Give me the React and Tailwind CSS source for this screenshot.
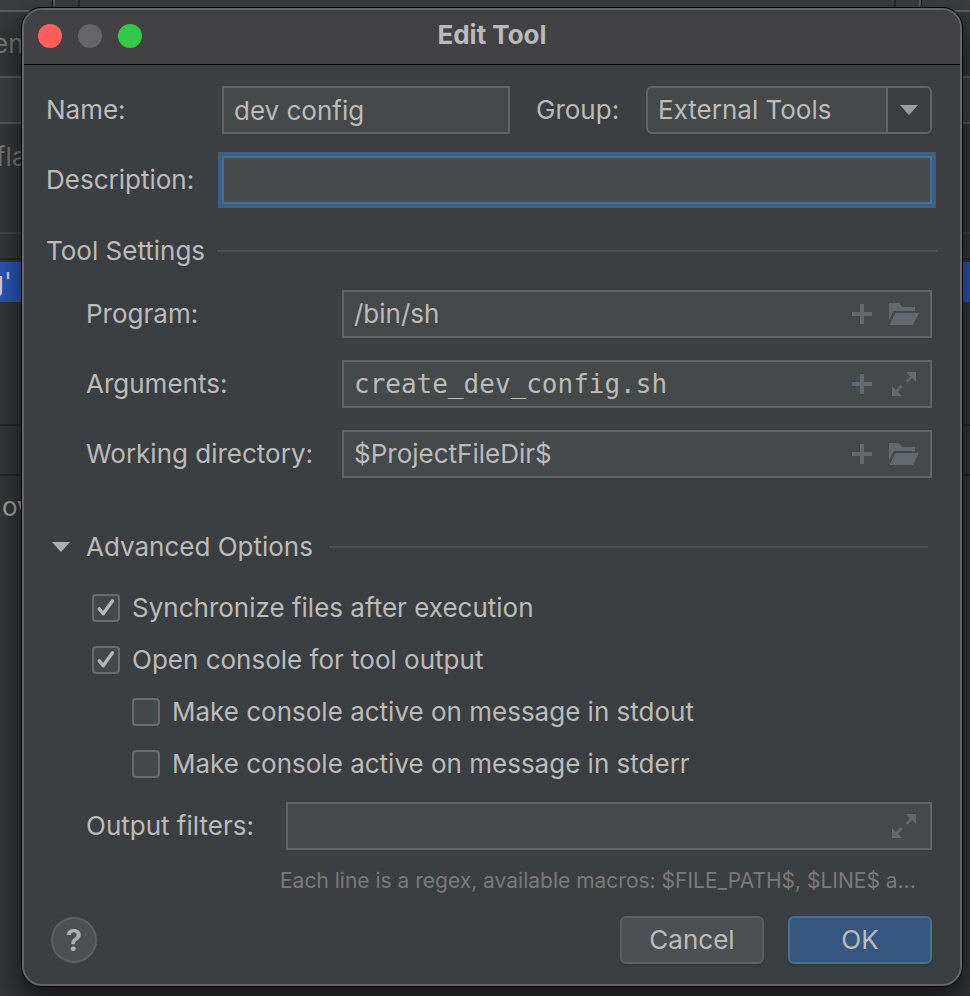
import { useState } from "react";

const fieldBox =
  "flex h-12 min-w-0 items-center border-2 border-[#646464] bg-[#45494a]";
const fieldInput =
  "min-w-0 flex-1 bg-transparent px-[10px] text-[#bbbbbb] outline-none";

function PlusIcon() {
  return (
    <svg width="20" height="20" viewBox="0 0 20 20" fill="#626a6e" aria-hidden="true">
      <path d="M8 0h4v8h8v4h-8v8H8v-8H0V8h8z" />
    </svg>
  );
}

function FolderIcon() {
  return (
    <svg width="30" height="22" viewBox="0 0 30 22" fill="#626a6e" aria-hidden="true">
      <path d="M0 0h10l3 4h13v4H4.500L0 17.500z" />
      <path d="M6.500 10H30l-6 12H0.500z" />
    </svg>
  );
}

function ExpandIcon() {
  return (
    <svg width="24" height="24" viewBox="0 0 24 24" fill="#626a6e" aria-hidden="true">
      <path d="M14 0h10v10l-3.900-3.900-4.600 4.600-1.900-1.900 4.400-4.400z" />
      <path d="M10 24H0V14l3.900 3.900 4.900-4.900 1.900 1.900-4.900 4.900z" />
    </svg>
  );
}

function IconButton({ label, children }) {
  return (
    <button type="button" aria-label={label} className="flex h-8 w-8 items-center justify-center">
      {children}
    </button>
  );
}

function SettingRow({ id, label, value, mono, browse }) {
  return (
    <div className="flex items-center pl-10">
      <label htmlFor={id} className="w-64 shrink-0 whitespace-nowrap">
        {label}
      </label>
      <div className={`${fieldBox} flex-1 gap-[10px] pr-[10px]`}>
        <input
          id={id}
          defaultValue={value}
          className={mono ? `${fieldInput} font-['DejaVu_Sans_Mono',monospace]` : fieldInput}
        />
        <IconButton label={`Insert macro: ${label}`}>
          <PlusIcon />
        </IconButton>
        <IconButton label={`Open: ${label}`}>
          {browse ? <FolderIcon /> : <ExpandIcon />}
        </IconButton>
      </div>
    </div>
  );
}

function CheckRow({ label, initial, nested }) {
  const [checked, setChecked] = useState(initial);
  return (
    <label className={`flex h-7 items-center gap-3 whitespace-nowrap ${nested ? "pl-[86px]" : "pl-[46px]"}`}>
      <span className="grid h-7 w-7 shrink-0">
        <input
          type="checkbox"
          checked={checked}
          onChange={(e) => setChecked(e.target.checked)}
          className="col-start-1 row-start-1 h-7 w-7 appearance-none rounded border-2 border-[#6b6b6b] bg-[#43494a]"
        />
        {checked && (
          <svg
            className="pointer-events-none col-start-1 row-start-1"
            width="28"
            height="28"
            viewBox="0 0 28 28"
            fill="none"
            stroke="#b4b6b7"
            strokeWidth="3.4"
            strokeLinecap="round"
            strokeLinejoin="round"
            aria-hidden="true"
          >
            <path d="M7.200 14.800l4 5L20.500 6.800" />
          </svg>
        )}
      </span>
      {label}
    </label>
  );
}

function Backdrop() {
  return (
    <div className="absolute inset-0 overflow-hidden bg-[#353738] text-[26px] leading-8 text-[#77797a]">
      <div className="flex h-3 justify-between border-b-2 border-[#5c5d5e] bg-[#3a3e40] pr-[49px] pl-[53px]">
        <span className="w-[27px] border-x-2 border-r-[#28292a] border-l-[#5c5d5e] shadow-[-1px_0_0_#000]" />
        <span className="w-[27px] border-x-2 border-r-[#5c5d5e] border-l-[#28292a] shadow-[1px_0_0_#000]" />
      </div>
      <div className="flex h-[66px] items-center border-b-2 border-[#5c5d5e]">
        <span className="-ml-[7px]">ent</span>
      </div>
      <div className="h-[46px] border-b-2 border-[#5c5d5e] bg-[#3c4042]" />
      <div className="flex h-[110px] items-start border-b-2 border-[#454748] pt-[17px]">
        <span className="-ml-1">fla</span>
      </div>
      <div className="h-[26px] border-b-2 border-[#27292a]" />
      <div className="mt-[2px] flex h-10 items-center bg-[#2a57b8]">
        <span className="-ml-3 text-[#d5d8e0]">g'</span>
      </div>
      <div className="mt-[122px] h-[52px] border-y-2 border-[#27292a]" />
      <div className="pt-[15px] pl-[2px] text-[#a5a6a7]">ov</div>
    </div>
  );
}

export default function App() {
  return (
    <main className="relative min-h-screen pt-2 pr-2 pb-[10px] pl-[22px] font-[Inter,'Liberation_Sans',sans-serif]">
      <Backdrop />
      <section
        aria-labelledby="dialog-title"
        className="relative overflow-hidden rounded-[20px] border-2 border-[#656668] bg-[#3c3f41] text-[26px] leading-8 text-[#bbbbbb] shadow-[0_0_0_1px_#000,0_16px_30px_4px_rgba(0,0,0,0.55)]"
      >
        <header className="grid h-[55px] grid-cols-[1fr_auto_1fr] items-center border-b border-black bg-[#424143] px-[14px] pb-[2px]">
          <div className="flex gap-4">
            <button type="button" aria-label="Close" className="h-6 w-6 rounded-full bg-[#ff5f5a]" />
            <button type="button" aria-label="Minimize" className="h-6 w-6 rounded-full bg-[#656467]" />
            <button type="button" aria-label="Zoom" className="h-6 w-6 rounded-full bg-[#34c748]" />
          </div>
          <h1 id="dialog-title" className="pb-[2px] font-bold text-[#bababa]">
            Edit Tool
          </h1>
        </header>

        <form className="pt-[21px] pr-7 pb-5 pl-[22px]" onSubmit={(e) => e.preventDefault()}>
          <div className="flex items-center">
            <label htmlFor="name" className="w-44 shrink-0">Name:</label>
            <input
              id="name"
              defaultValue="dev config"
              className="h-12 w-72 min-w-0 border-2 border-[#646464] bg-[#45494a] px-[10px] outline-none"
            />
            <label htmlFor="group" className="ml-[26px] w-[110px] shrink-0">Group:</label>
            <div className="grid h-12 min-w-0 flex-1 grid-cols-[1fr_44px] overflow-hidden rounded-md border-2 border-[#646464] bg-[#45494a]">
              <select id="group" className="col-span-2 col-start-1 row-start-1 min-w-0 appearance-none bg-transparent px-[10px] outline-none">
                <option>External Tools</option>
              </select>
              <span className="pointer-events-none col-start-2 row-start-1 flex items-center justify-center border-l-2 border-[#646464] bg-[#3c3f41]">
                <svg width="18" height="10" viewBox="0 0 18 10" fill="#9a9da0" aria-hidden="true">
                  <path d="M0 0h18L9 10z" />
                </svg>
              </span>
            </div>
          </div>

          <div className="mt-[22px] flex items-center">
            <label htmlFor="description" className="w-44 shrink-0">Description:</label>
            <input
              id="description"
              className="h-12 min-w-0 flex-1 border-2 border-[#466d94] bg-[#45494a] px-[10px] shadow-[0_0_0_4px_#3d6185] outline-none"
            />
          </div>

          <div className="mt-[31px] -mr-[6px] flex items-center gap-3">
            <h2>Tool Settings</h2>
            <span className="h-[2px] flex-1 bg-[#515151]" />
          </div>

          <div className="mt-[23px] flex flex-col gap-[22px]">
            <SettingRow id="program" label="Program:" value="/bin/sh" browse />
            <SettingRow id="arguments" label="Arguments:" value="create_dev_config.sh" mono />
            <SettingRow id="directory" label="Working directory:" value="$ProjectFileDir$" browse />
          </div>

          <div className="mt-[53px] mr-1 flex items-center gap-4">
            <button type="button" aria-expanded="true" className="flex items-center gap-4 pl-[6px]">
              <svg width="18" height="10" viewBox="0 0 18 10" fill="#adadad" aria-hidden="true">
                <path d="M0 0h18L9 10z" />
              </svg>
              Advanced Options
            </button>
            <span className="h-[2px] flex-1 bg-[#515151]" />
          </div>

          <div className="mt-[31px] flex flex-col gap-6">
            <CheckRow label="Synchronize files after execution" initial />
            <CheckRow label="Open console for tool output" initial />
            <CheckRow label="Make console active on message in stdout" initial={false} nested />
            <CheckRow label="Make console active on message in stderr" initial={false} nested />
          </div>

          <div className="mt-6 flex items-center pl-10">
            <label htmlFor="filters" className="w-[200px] shrink-0">Output filters:</label>
            <div className={`${fieldBox} flex-1 pr-[10px]`}>
              <input id="filters" className={fieldInput} />
              <IconButton label="Expand output filters">
                <ExpandIcon />
              </IconButton>
            </div>
          </div>
          <p className="mt-[15px] overflow-hidden pl-[234px] text-[21px] text-ellipsis whitespace-nowrap text-[#7a7a7a]">
            Each line is a regex, available macros: $FILE_PATH$, $LINE$ a...
          </p>

          <div className="mt-[19px] flex items-center gap-6">
            <button
              type="button"
              aria-label="Help"
              className="mr-auto ml-[5px] flex h-[46px] w-[46px] items-center justify-center rounded-full border-2 border-[#5e6060] bg-[#4c5052] text-[30px] font-semibold text-[#afb1b3]"
            >
              ?
            </button>
            <button type="button" className="h-12 w-36 rounded-md border-2 border-[#5e6060] bg-[#4c5052] shadow-[0_2px_2px_#36393b]">
              Cancel
            </button>
            <button type="submit" className="h-12 w-36 rounded-md border-2 border-[#4c708c] bg-[#365880] shadow-[0_2px_2px_#36393b]">
              OK
            </button>
          </div>
        </form>
      </section>
    </main>
  );
}
